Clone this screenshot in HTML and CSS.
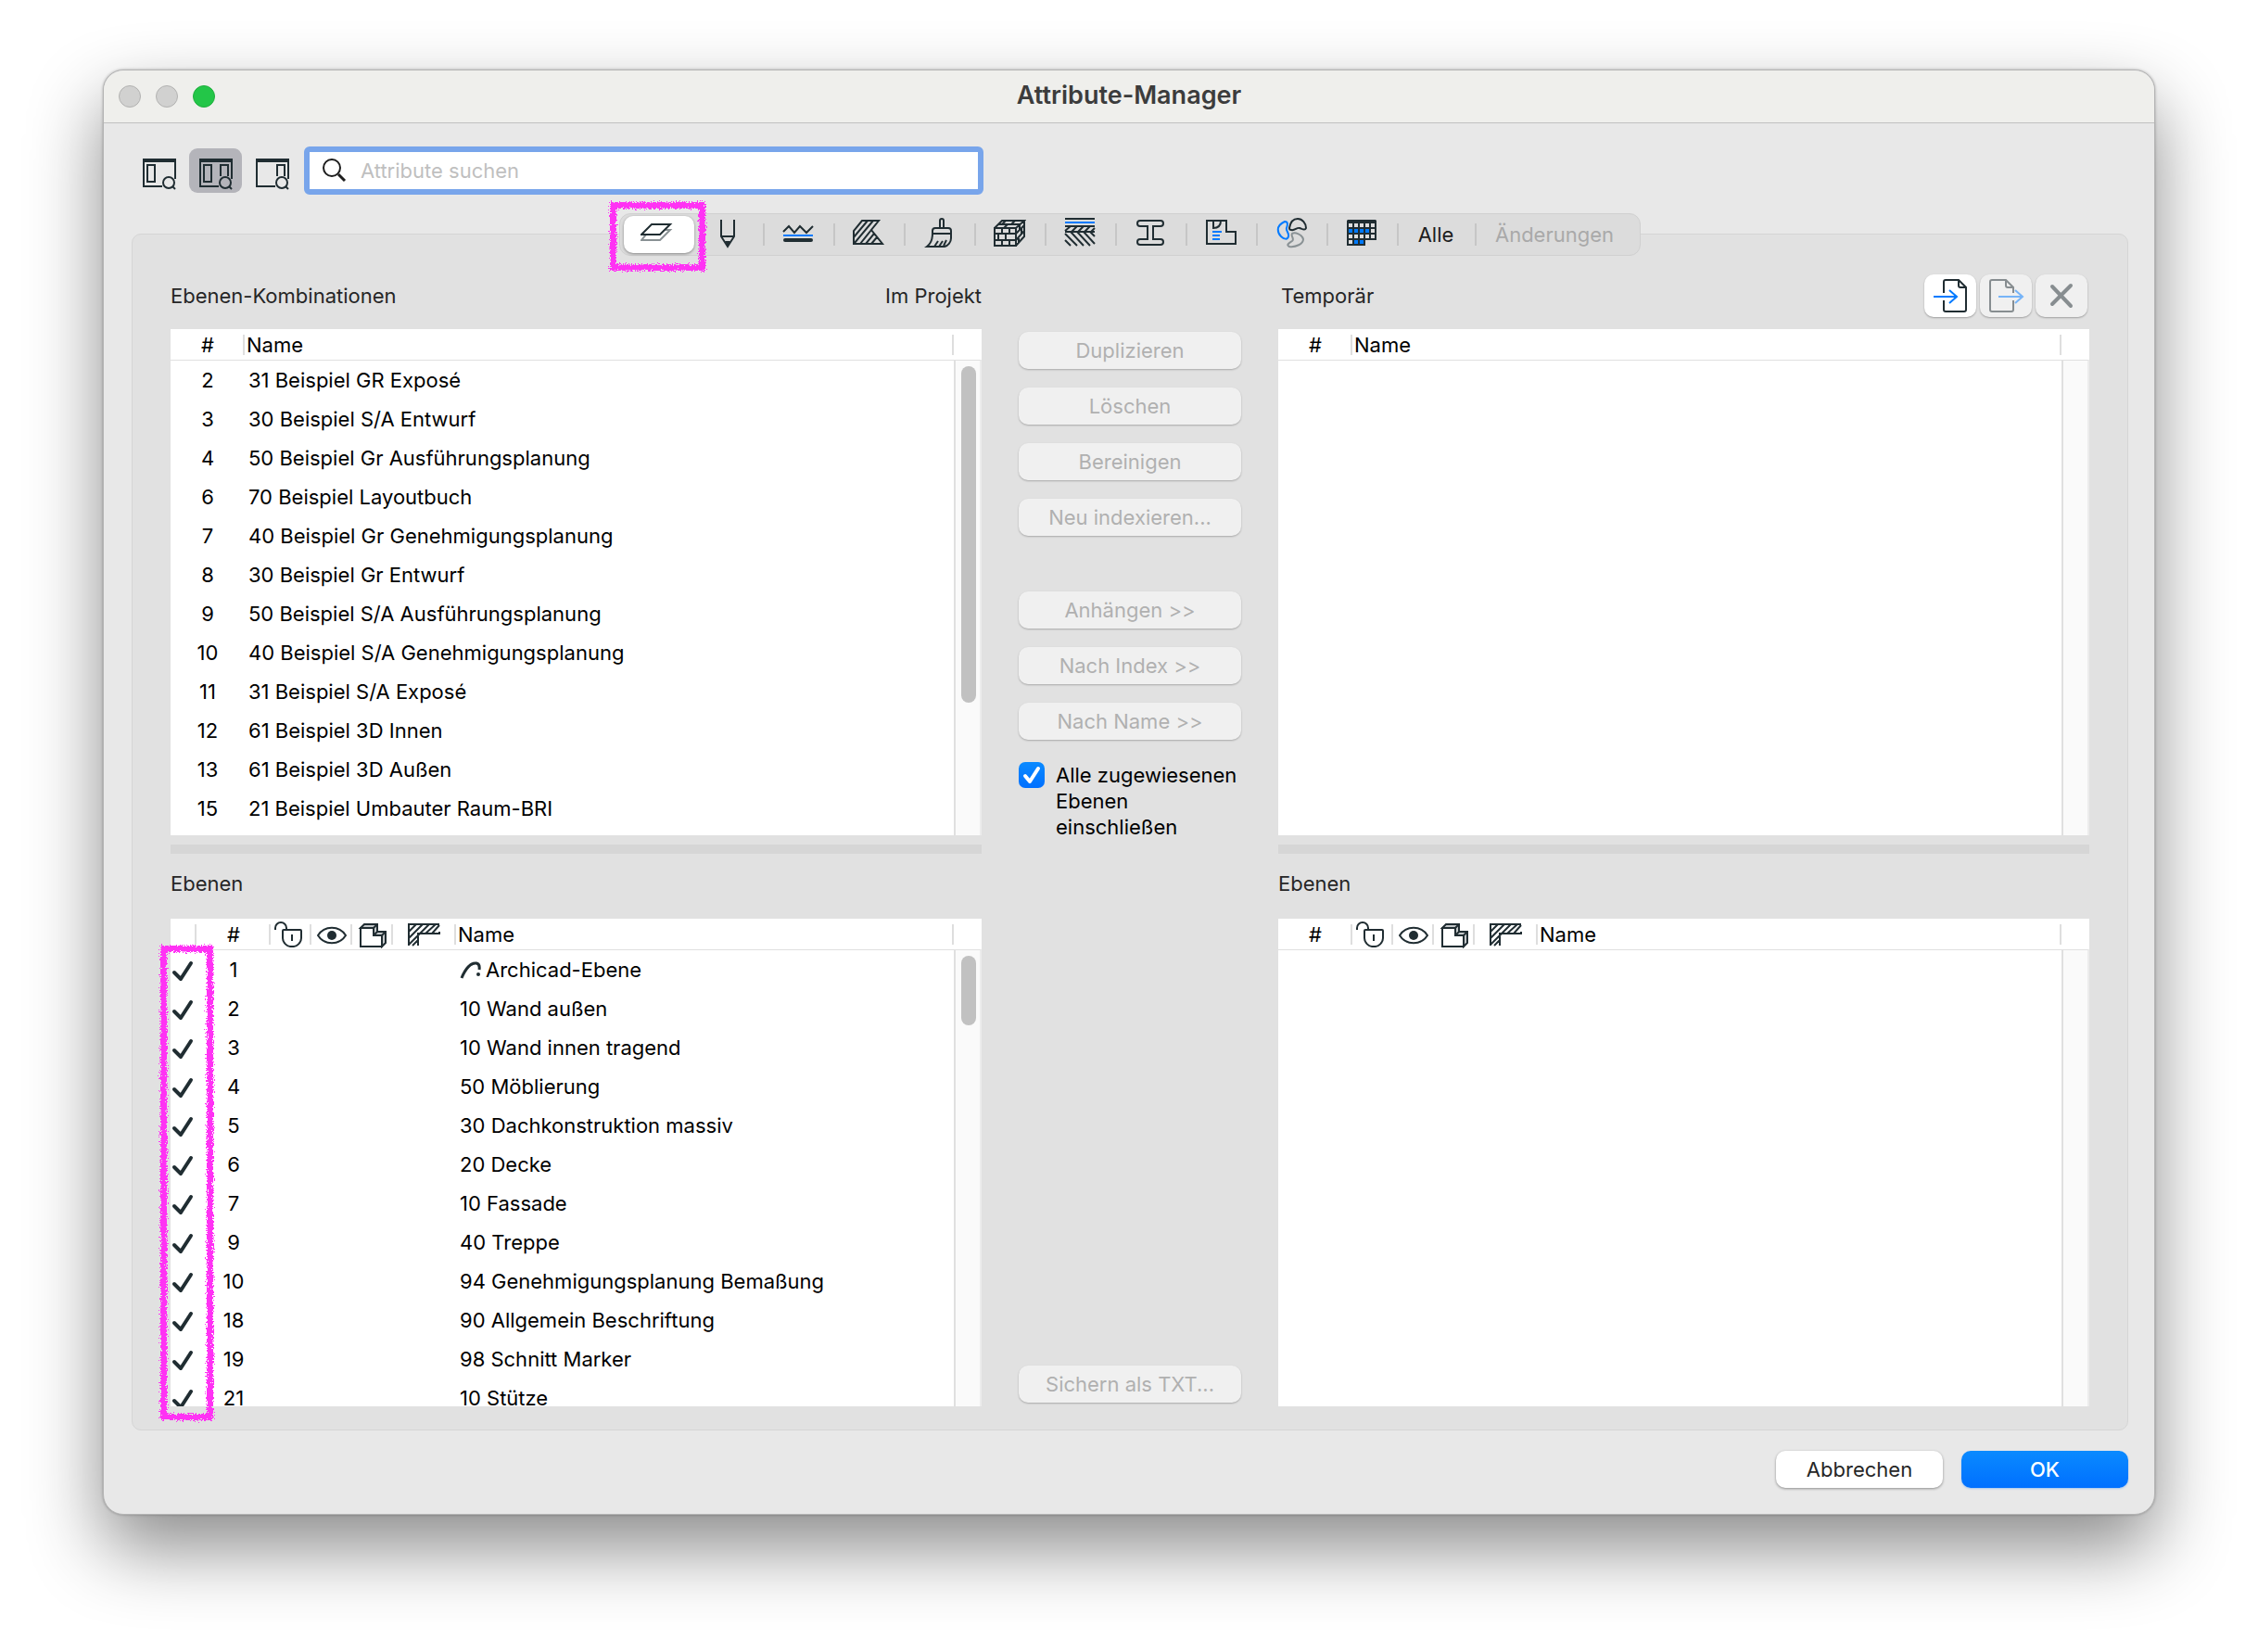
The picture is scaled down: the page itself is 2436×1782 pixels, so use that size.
FILE: index.html
```html
<!DOCTYPE html>
<html lang="de">
<head>
    <meta charset="UTF-8">
    <title>Attribute-Manager</title>
    <link rel="stylesheet" href="styles.css">
</head>
<body>
    <!-- Icons -->
    <svg class="sprite" aria-hidden="true">
        <filter id="crayon" x="-10%" y="-10%" width="120%" height="120%">
            <feTurbulence type="fractalNoise" baseFrequency="0.7" numOctaves="2" seed="4" result="noise"/>
            <feDisplacementMap in="SourceGraphic" in2="noise" scale="8" xChannelSelector="R" yChannelSelector="G"/>
        </filter>
        <symbol id="check" viewBox="0 0 24 24">
            <path d="M3 13l7 7L21 3" fill="none" stroke="#202d32" stroke-width="4" stroke-linecap="round" stroke-linejoin="round"/>
        </symbol>
        <symbol id="lock" viewBox="-1 0 40 30">
            <path d="M2 10V8a6 6 0 0 1 12 0v2M11 10h18q1 0 1 1v8c0 5-5 9-8 9h-4c-3 0-8-4-8-9v-8q0-1 1-1zM20 15v7"/>
        </symbol>
        <symbol id="eye" viewBox="-4 0 40 30">
            <path d="M1 16C8 5 24 5 31 16C24 27 8 27 1 16z"/>
            <circle cx="16" cy="16" r="5" fill="#202d32" stroke="none"/>
        </symbol>
        <symbol id="solid" viewBox="-5 0 40 30">
            <path d="M2 8l4-4h14v8l-4 4V8zM16 16l4-4h9v12l-4 4V16z" fill="#c4c8ca"/>
            <path d="M2 8h14v8h9v12H2z" fill="#fff"/>
            <path d="M16 8l4-4M25 16l4-4"/>
        </symbol>
        <symbol id="wall" viewBox="1 0 36 30">
            <path d="M2 27V4h33M12 27V14h23v-2M2 12l8-8M2 19L17 4M2 26L24 4M6 27l6-6M20 14L31 4M27 14l8-9"/>
        </symbol>
    </svg>

    <main class="window">
        <header class="titlebar">
            <div class="lights">
                <span class="light"></span>
                <span class="light"></span>
                <span class="light light-green"></span>
            </div>
            <h1 class="title">Attribute-Manager</h1>
        </header>

        <div class="content">
            <!-- Suche -->
            <div class="toolbar">
                <button class="view-btn" type="button" aria-label="Links suchen">
                    <svg class="icon" viewBox="0 0 36 36">
                        <path d="M21 32H1V4h34v20M5 9h8v18H5z"/><path d="M0 4h36" stroke-width="4"/>
                        <circle cx="28" cy="28" r="6"/><path d="M32 32l3 3"/>
                    </svg>
                </button>
                <button class="view-btn active" type="button" aria-label="Beide suchen">
                    <svg class="icon" viewBox="0 0 36 36">
                        <path d="M21 32H1V4h34v20M5 9h8v18H5zM23 21V9h8v12"/><path d="M0 4h36" stroke-width="4"/>
                        <circle cx="28" cy="28" r="6"/><path d="M32 32l3 3"/>
                    </svg>
                </button>
                <button class="view-btn" type="button" aria-label="Rechts suchen">
                    <svg class="icon" viewBox="0 0 36 36">
                        <path d="M21 32H1V4h34v20M23 21V9h8v12"/><path d="M0 4h36" stroke-width="4"/>
                        <circle cx="28" cy="28" r="6"/><path d="M32 32l3 3"/>
                    </svg>
                </button>
                <label class="search">
                    <svg class="search-icon" viewBox="0 0 26 26">
                        <circle cx="10" cy="10" r="9"/><path d="M17 17l7 7" stroke-width="3"/>
                    </svg>
                    <input class="search-input" type="text" placeholder="Attribute suchen" aria-label="Attribute suchen">
                </label>
            </div>

            <!-- Attribut-Typen -->
            <nav class="tabs">
                <button class="tab selected" type="button" aria-label="Ebenen">
                    <svg class="icon" viewBox="0 0 36 36">
                        <path d="M6 18l-5 6h20L32 13h-5" stroke="#899194"/>
                        <path d="M1 18L12 7h20L21 18z"/>
                    </svg>
                    <span class="marker marker-tab"></span>
                </button>
                <button class="tab" type="button" aria-label="Stifte">
                    <svg class="icon" viewBox="0 0 36 36">
                        <path d="M11 2v18l7 11 7-11V2M11 20h14"/><path d="M15 25h6l-3 6z" fill="#202d32" stroke="none"/>
                    </svg>
                </button>
                <button class="tab" type="button" aria-label="Linien">
                    <svg class="icon" viewBox="0 0 36 36">
                        <path d="M2 15l6-6 6 7 6-7 7 7 7-7"/>
                        <path d="M2 19h32" stroke="#007aff"/>
                        <path d="M4 24h28" stroke-width="4" stroke-linecap="round"/>
                    </svg>
                </button>
                <button class="tab" type="button" aria-label="Schraffuren">
                    <svg class="icon" viewBox="0 0 36 36">
                        <path d="M2 28V14l9-11h18l-8 10 12 15zM2 21L17 3M3 27L23 3M9 28l12-15M15 28l9-11M21 28l6-7"/>
                    </svg>
                </button>
                <button class="tab" type="button" aria-label="Oberflächen">
                    <svg class="icon" viewBox="0 0 36 36">
                        <path d="M19 11V3a2 2 0 0 1 4 0v8M11 17v-3q0-3 3-3h14q3 0 3 3v3zM11 17c0 6-2 11-6 14h19c4-1 7-5 7-9v-5M13 31l4-6M18 31l4-6M23 30l3-6"/>
                    </svg>
                </button>
                <button class="tab" type="button" aria-label="Baustoffe">
                    <svg class="icon" viewBox="0 0 36 36">
                        <path d="M2 11h23v19H2zM2 11l8-8h24l-9 8M34 3v17l-9 10M2 17h23M2 24h23M10 11v6M18 11v6M6 17v7M14 17v7M10 24v6M18 24v6M6 7h23M14 3l-4 4M24 3l-4 4M16 7l-4 4M25 17l9-9M25 24l9-10M29 7v6M31 11v6M28 20v7"/>
                    </svg>
                </button>
                <button class="tab" type="button" aria-label="Mehrschichtige Bauteile">
                    <svg class="icon" viewBox="0 0 36 36">
                        <path d="M2 1h32M2 9h32M2 15h32"/>
                        <path d="M2 5h32" stroke="#007aff"/>
                        <path d="M2 14l6-5M9 15l6-6M16 15l6-6M23 15l6-6M30 15l4-4M2 24l6 6M2 17l13 13M8 15l14 15M15 15l14 15M22 15l12 13M29 15l5 5"/>
                    </svg>
                </button>
                <button class="tab" type="button" aria-label="Profile">
                    <svg class="icon" viewBox="0 0 36 36">
                        <path d="M7 3h22q3 0 3 3t-3 3h-8v14h8q3 0 3 3t-3 3H7q-3 0-3-3t3-3h8V9H7Q4 9 4 6t3-3z"/>
                    </svg>
                </button>
                <button class="tab" type="button" aria-label="Raumkategorien">
                    <svg class="icon" viewBox="0 0 36 36">
                        <path d="M3 3h21v12h10v13H3zM10 3v8q8 0 8-8"/>
                        <path d="M9 15h10M9 19h8M9 23h8" stroke="#007aff"/>
                    </svg>
                </button>
                <button class="tab" type="button" aria-label="Markenkategorien">
                    <svg class="icon" viewBox="0 0 36 36">
                        <path d="M11 4c4 0 3 4 2 7s3 5 2 9-5 3-8 0S0 9 11 4z" stroke="#007aff"/>
                        <path d="M16 11c1-6 4-10 9-10s9 5 9 10c-1 3-4 1-7 0s-5 3-9 2c-1 0-2-1-2-2z"/>
                        <path d="M19 17c3-2 11 1 12 6 0 5-8 9-15 8-4-2 0-4 3-6s-2-6 0-8z" stroke="#899194"/>
                    </svg>
                </button>
                <button class="tab" type="button" aria-label="Betriebssystem">
                    <svg class="icon" viewBox="0 0 36 36">
                        <path d="M3 2h30l1 1v21H22v6H2V3z" fill="#202d32" stroke="none"/>
                        <path d="M4 6h4v4H4zM10 6h4v4h-4zM16 6h4v4h-4zM22 6h4v4h-4zM28 6h4v4h-4zM28 12h4v4h-4zM4 18h4v4H4zM10 18h4v4h-4zM16 18h4v4h-4zM22 18h4v4h-4zM28 18h4v4h-4zM4 24h4v4H4z" fill="#ddd" stroke="none"/>
                        <path d="M4 12h4v4H4zM10 12h4v4h-4zM16 12h4v4h-4zM22 12h4v4h-4zM10 24h4v4h-4zM16 24h4v4h-4z" fill="#007aff" stroke="none"/>
                    </svg>
                </button>
                <button class="tab tab-all" type="button">Alle</button>
                <button class="tab tab-changes" type="button" disabled>Änderungen</button>
            </nav>

            <section class="panel">
                <!-- Projekt -->
                <div class="side">
                    <div class="caption">
                        <h2 class="label">Ebenen-Kombinationen</h2>
                        <span class="label">Im Projekt</span>
                    </div>
                    <div class="list list-top">
                        <div class="list-view">
                            <table class="table">
                                <colgroup><col class="col-id"><col></colgroup>
                                <thead>
                                    <tr><th class="num">#</th><th>Name</th></tr>
                                </thead>
                                <tbody>
                                    <tr><td class="num">2</td><td>31 Beispiel GR Exposé</td></tr>
                                    <tr><td class="num">3</td><td>30 Beispiel S/A Entwurf</td></tr>
                                    <tr><td class="num">4</td><td>50 Beispiel Gr Ausführungsplanung</td></tr>
                                    <tr><td class="num">6</td><td>70 Beispiel Layoutbuch</td></tr>
                                    <tr><td class="num">7</td><td>40 Beispiel Gr Genehmigungsplanung</td></tr>
                                    <tr><td class="num">8</td><td>30 Beispiel Gr Entwurf</td></tr>
                                    <tr><td class="num">9</td><td>50 Beispiel S/A Ausführungsplanung</td></tr>
                                    <tr><td class="num">10</td><td>40 Beispiel S/A Genehmigungsplanung</td></tr>
                                    <tr><td class="num">11</td><td>31 Beispiel S/A Exposé</td></tr>
                                    <tr><td class="num">12</td><td>61 Beispiel 3D Innen</td></tr>
                                    <tr><td class="num">13</td><td>61 Beispiel 3D Außen</td></tr>
                                    <tr><td class="num">15</td><td>21 Beispiel Umbauter Raum-BRI</td></tr>
                                </tbody>
                            </table>
                        </div>
                        <div class="track"><div class="thumb thumb-long"></div></div>
                    </div>
                    <div class="splitter"></div>
                    <h2 class="label label-layers">Ebenen</h2>
                    <div class="list list-bottom">
                        <div class="list-view">
                            <table class="table">
                                <colgroup>
                                    <col class="col-check"><col class="col-id"><col class="col-icon"><col class="col-icon"><col class="col-icon"><col class="col-wall"><col>
                                </colgroup>
                                <thead>
                                    <tr>
                                        <th></th>
                                        <th class="num">#</th>
                                        <th><svg class="head-icon"><use href="#lock"/></svg></th>
                                        <th><svg class="head-icon"><use href="#eye"/></svg></th>
                                        <th><svg class="head-icon"><use href="#solid"/></svg></th>
                                        <th class="num"><svg class="head-icon wide"><use href="#wall"/></svg></th>
                                        <th>Name</th>
                                    </tr>
                                </thead>
                                <tbody>
                                    <tr>
                                        <td class="mark"><svg class="check"><use href="#check"/></svg></td><td class="num">1</td><td colspan="4"></td>
                                        <td>
                                            <span class="with-icon">
                                                <svg class="arc" viewBox="0 0 24 24">
                                                    <path d="M2 21C6 11 12 4 18 5q4 1 3 7"/><circle cx="20" cy="17" r="2" fill="#202d32" stroke="none"/>
                                                </svg>
                                                Archicad-Ebene
                                            </span>
                                        </td>
                                    </tr>
                                    <tr><td class="mark"><svg class="check"><use href="#check"/></svg></td><td class="num">2</td><td colspan="4"></td><td>10 Wand außen</td></tr>
                                    <tr><td class="mark"><svg class="check"><use href="#check"/></svg></td><td class="num">3</td><td colspan="4"></td><td>10 Wand innen tragend</td></tr>
                                    <tr><td class="mark"><svg class="check"><use href="#check"/></svg></td><td class="num">4</td><td colspan="4"></td><td>50 Möblierung</td></tr>
                                    <tr><td class="mark"><svg class="check"><use href="#check"/></svg></td><td class="num">5</td><td colspan="4"></td><td>30 Dachkonstruktion massiv</td></tr>
                                    <tr><td class="mark"><svg class="check"><use href="#check"/></svg></td><td class="num">6</td><td colspan="4"></td><td>20 Decke</td></tr>
                                    <tr><td class="mark"><svg class="check"><use href="#check"/></svg></td><td class="num">7</td><td colspan="4"></td><td>10 Fassade</td></tr>
                                    <tr><td class="mark"><svg class="check"><use href="#check"/></svg></td><td class="num">9</td><td colspan="4"></td><td>40 Treppe</td></tr>
                                    <tr><td class="mark"><svg class="check"><use href="#check"/></svg></td><td class="num">10</td><td colspan="4"></td><td>94 Genehmigungsplanung Bemaßung</td></tr>
                                    <tr><td class="mark"><svg class="check"><use href="#check"/></svg></td><td class="num">18</td><td colspan="4"></td><td>90 Allgemein Beschriftung</td></tr>
                                    <tr><td class="mark"><svg class="check"><use href="#check"/></svg></td><td class="num">19</td><td colspan="4"></td><td>98 Schnitt Marker</td></tr>
                                    <tr><td class="mark"><svg class="check"><use href="#check"/></svg></td><td class="num">21</td><td colspan="4"></td><td>10 Stütze</td></tr>
                                </tbody>
                            </table>
                        </div>
                        <div class="track"><div class="thumb thumb-short"></div></div>
                        <span class="marker marker-checks"></span>
                    </div>
                </div>

                <!-- Befehle -->
                <div class="actions">
                    <div class="group">
                        <button class="btn" type="button" disabled>Duplizieren</button>
                        <button class="btn" type="button" disabled>Löschen</button>
                        <button class="btn" type="button" disabled>Bereinigen</button>
                        <button class="btn" type="button" disabled>Neu indexieren...</button>
                    </div>
                    <div class="group">
                        <button class="btn" type="button" disabled>Anhängen &gt;&gt;</button>
                        <button class="btn" type="button" disabled>Nach Index &gt;&gt;</button>
                        <button class="btn" type="button" disabled>Nach Name &gt;&gt;</button>
                    </div>
                    <div class="include">
                        <span class="tick">
                            <input class="tick-input" type="checkbox" id="include" checked>
                            <svg class="tick-mark" viewBox="0 0 28 28"><path d="M7 15l5 6 9-14"/></svg>
                        </span>
                        <label for="include">Alle zugewiesenen Ebenen einschließen</label>
                    </div>
                    <button class="btn save" type="button" disabled>Sichern als TXT...</button>
                </div>

                <!-- Temporär -->
                <div class="side">
                    <div class="caption">
                        <h2 class="label label-temp">Temporär</h2>
                        <div class="file-btns">
                            <button class="file-btn" type="button" aria-label="Importieren">
                                <svg class="file-icon" viewBox="0 0 56 46">
                                    <path d="M21 20V8q0-2 2-2h14l8 8v24q0 2-2 2H23q-2 0-2-2V28M37 6v6q0 2 2 2h6"/>
                                    <path d="M10 24h24M27 17l8 7-8 7" stroke="#007aff"/>
                                </svg>
                            </button>
                            <button class="file-btn" type="button" aria-label="Exportieren" disabled>
                                <svg class="file-icon" viewBox="0 0 56 46">
                                    <path d="M36 20v-6l-8-8H13q-2 0-2 2v30q0 2 2 2h21q2 0 2-2V28M28 6v6q0 2 2 2h6"/>
                                    <path d="M20 24h25M38 17l8 7-8 7" stroke="#007aff"/>
                                </svg>
                            </button>
                            <button class="file-btn" type="button" aria-label="Schließen" disabled>
                                <svg class="file-icon" viewBox="0 0 56 46">
                                    <path d="M18 13l20 21M38 12L18 32" stroke-width="4" stroke-linecap="round"/>
                                </svg>
                            </button>
                        </div>
                    </div>
                    <div class="list list-top">
                        <div class="list-view">
                            <table class="table">
                                <colgroup><col class="col-id"><col></colgroup>
                                <thead>
                                    <tr><th class="num">#</th><th>Name</th></tr>
                                </thead>
                            </table>
                        </div>
                        <div class="track"></div>
                    </div>
                    <div class="splitter"></div>
                    <h2 class="label label-layers">Ebenen</h2>
                    <div class="list list-bottom">
                        <div class="list-view">
                            <table class="table">
                                <colgroup>
                                    <col class="col-id"><col class="col-icon"><col class="col-icon"><col class="col-icon"><col class="col-wall"><col>
                                </colgroup>
                                <thead>
                                    <tr>
                                        <th class="num">#</th>
                                        <th><svg class="head-icon"><use href="#lock"/></svg></th>
                                        <th><svg class="head-icon"><use href="#eye"/></svg></th>
                                        <th><svg class="head-icon"><use href="#solid"/></svg></th>
                                        <th class="num"><svg class="head-icon wide"><use href="#wall"/></svg></th>
                                        <th>Name</th>
                                    </tr>
                                </thead>
                            </table>
                        </div>
                        <div class="track"></div>
                    </div>
                </div>
            </section>

            <footer class="footer">
                <button class="footer-btn" type="button">Abbrechen</button>
                <button class="footer-btn primary" type="button">OK</button>
            </footer>
        </div>
    </main>
</body>
</html>
```
FILE: styles.css
```css
:root {
    --ink: #202d32;
    --blue: #007aff;
    --line: #e0e0e0;
    --magenta: #ff33f4;
}

* {
    box-sizing: border-box;
    margin: 0;
    padding: 0;
}

body {
    background: #fff;
    font-family: Inter, "Liberation Sans", sans-serif;
    font-size: 22px;
    line-height: 28px;
    color: #000;
    padding: 75px 111px 147px;
}

button,
input {
    font: inherit;
    color: inherit;
    border: none;
    background: none;
}

svg {
    display: block;
    fill: none;
    stroke: var(--ink);
    stroke-width: 2;
}

.sprite {
    position: absolute;
    width: 0;
    height: 0;
}

.window {
    background: #e8e8e8;
    border: 1px solid #b4b4b4;
    border-radius: 22px;
    box-shadow: 0 0 3px rgba(0, 0, 0, 0.3), 0 36px 80px rgba(0, 0, 0, 0.46);
}

.titlebar {
    display: grid;
    grid-template-columns: 1fr auto 1fr;
    align-items: center;
    height: 57px;
    padding: 0 16px;
    background: #efefec;
    border-bottom: 1px solid #c0c0c0;
    border-radius: 22px 22px 0 0;
}

.lights {
    display: flex;
    gap: 16px;
}

.light {
    width: 24px;
    height: 24px;
    border-radius: 50%;
    background: #d1d1d0;
    border: 1px solid #b2b2b1;
}

.light-green {
    background: #23c648;
    border-color: #1fae3d;
}

.title {
    padding-bottom: 2px;
    font-size: 27px;
    font-weight: 600;
    color: #3c3c3c;
}

.content {
    padding: 25px 28px 28px 30px;
}

/* Suchleiste */
.toolbar {
    display: flex;
    align-items: center;
    gap: 4px;
    padding-left: 1px;
}

.view-btn {
    display: grid;
    place-items: center;
    width: 57px;
    height: 48px;
    padding-top: 5px;
    border-radius: 9px;
}

.view-btn.active {
    background: #b4b4ba;
}

.icon {
    width: 36px;
    height: 36px;
}

.search {
    display: flex;
    align-items: center;
    gap: 15px;
    width: 733px;
    height: 52px;
    margin-left: 2px;
    padding: 0 14px;
    background: #fff;
    border: 6px solid #78a5eb;
    border-radius: 6px;
}

.search-icon {
    width: 26px;
    height: 26px;
    stroke: #1d1d1d;
}

.search-input {
    flex: 1;
    outline: none;
}

.search-input::placeholder {
    color: #bfbfbf;
    opacity: 1;
}

/* Tabs */
.tabs {
    position: relative;
    z-index: 1;
    display: flex;
    width: fit-content;
    margin: 20px auto -24px;
    padding: 2px 4px;
    background: #dcdcdc;
    border: 1px solid #d0d0d0;
    border-radius: 12px;
}

.tab {
    position: relative;
    display: grid;
    place-items: center;
    width: 76px;
    height: 40px;
    padding-right: 4px;
    background: linear-gradient(#c6c6c6, #c6c6c6) right center / 2px 24px no-repeat;
}

.tab.selected {
    background: #fff;
    border-radius: 10px;
    box-shadow: 0 1px 3px rgba(0, 0, 0, 0.4);
}

.tab.tab-all {
    width: 84px;
    color: #1d1d1d;
}

.tab.tab-changes {
    width: 172px;
    background: none;
    color: #a9a9a9;
}

/* Markierungen */
.marker {
    position: absolute;
    border: 7px solid var(--magenta);
    filter: url(#crayon);
    pointer-events: none;
}

.marker-tab {
    inset: -15px -12px -19px -15px;
}

.marker-checks {
    top: 29px;
    bottom: -15px;
    left: -11px;
    width: 57px;
}

.panel {
    display: grid;
    grid-template-columns: 1fr 240px 1fr;
    gap: 40px;
    padding: 38px 41px 25px;
    background: #e1e1e1;
    border: 1px solid #d5d5d5;
    border-radius: 10px;
}

.side {
    min-width: 0;
}

.caption {
    display: flex;
    align-items: center;
    justify-content: space-between;
    height: 64px;
    padding-bottom: 8px;
}

.label {
    font-size: 22px;
    font-weight: 400;
    color: #262626;
}

.label-temp {
    padding-left: 3px;
}

.label-layers {
    padding: 18px 0 24px;
}

/* Listen */
.list {
    position: relative;
    display: flex;
    background: #fff;
}

.list-top {
    height: 546px;
}

.list-bottom {
    height: 526px;
}

.list-view {
    flex: 1;
    overflow: hidden;
}

.table {
    width: 100%;
    table-layout: fixed;
    border-collapse: separate;
    border-spacing: 0;
}

.col-check {
    width: 28px;
}

.col-id {
    width: 80px;
}

.col-icon {
    width: 44px;
}

.col-wall {
    width: 68px;
}

th {
    height: 34px;
    padding-left: 2px;
    font-weight: 400;
    text-align: left;
    white-space: nowrap;
    background: linear-gradient(#dedede, #dedede) right center / 2px 22px no-repeat;
    border-bottom: 1px solid var(--line);
}

td {
    height: 42px;
    padding-left: 4px;
    white-space: nowrap;
}

th.num,
td.num {
    padding: 0;
    text-align: center;
}

td.mark {
    padding: 4px 0 0 1px;
}

.head-icon {
    width: 40px;
    height: 30px;
}

.head-icon.wide {
    width: 36px;
    margin: 0 auto;
}

.check {
    width: 24px;
    height: 24px;
}

.with-icon {
    display: flex;
    align-items: center;
    gap: 4px;
}

.arc {
    width: 24px;
    height: 24px;
    stroke-width: 3;
}

.track {
    width: 30px;
    margin-top: 33px;
    padding: 6px;
    background: #fafafa;
    border-top: 1px solid var(--line);
    border-left: 2px solid var(--line);
    border-right: 2px solid #ececec;
}

.thumb {
    width: 16px;
    border-radius: 8px;
    background: #c1c1c1;
}

.thumb-long {
    height: 363px;
}

.thumb-short {
    height: 75px;
}

.splitter {
    height: 10px;
    margin-top: 10px;
    background: #d6d6d6;
}

/* Befehle */
.actions {
    display: flex;
    flex-direction: column;
    padding: 67px 0 4px;
}

.group {
    display: flex;
    flex-direction: column;
    gap: 20px;
    margin-bottom: 60px;
}

.btn {
    height: 40px;
    border-radius: 10px;
    background: #f0f0f0;
    box-shadow: 0 1px 2px rgba(0, 0, 0, 0.25);
    color: #b0b0b0;
}

.include {
    display: flex;
    gap: 12px;
    margin-top: -36px;
}

.tick {
    position: relative;
    flex: none;
    width: 28px;
    height: 28px;
}

.tick-input {
    appearance: none;
    display: block;
    width: 28px;
    height: 28px;
    border-radius: 7px;
    background: linear-gradient(#0a8aff, #0070ff);
}

.tick-mark {
    position: absolute;
    inset: 0;
    stroke: #fff;
    stroke-width: 4;
    stroke-linecap: round;
    stroke-linejoin: round;
    pointer-events: none;
}

.save {
    margin-top: auto;
}

.file-btns {
    display: flex;
    gap: 4px;
    padding-right: 2px;
}

.file-btn {
    width: 56px;
    height: 46px;
    border-radius: 10px;
    background: #fff;
    box-shadow: 0 1px 2px rgba(0, 0, 0, 0.3);
}

.file-btn:disabled {
    background: #f0f0f0;
}

.file-btn:disabled .file-icon {
    opacity: 0.5;
}

.file-icon {
    width: 56px;
    height: 46px;
}

/* Fußzeile */
.footer {
    display: flex;
    justify-content: flex-end;
    gap: 20px;
    padding-top: 22px;
}

.footer-btn {
    width: 180px;
    height: 40px;
    border-radius: 10px;
    background: #fff;
    box-shadow: 0 1px 3px rgba(0, 0, 0, 0.4);
    color: #262626;
}

.footer-btn.primary {
    background: linear-gradient(#0a8aff, #0070ff);
    box-shadow: 0 1px 2px rgba(0, 112, 255, 0.3);
    color: #fff;
    font-weight: 500;
}
```
